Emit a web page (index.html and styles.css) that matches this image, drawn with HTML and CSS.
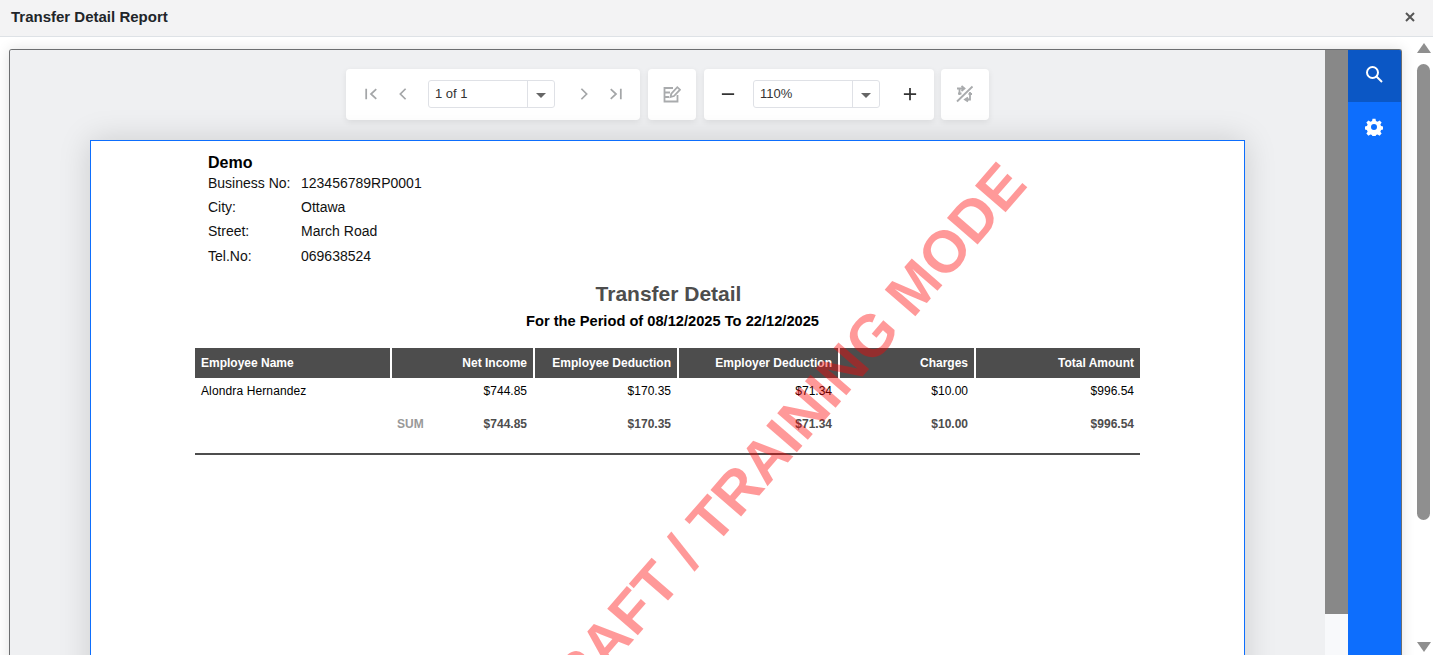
FILE: index.html
```html
<!DOCTYPE html>
<html lang="en">
<head>
<meta charset="utf-8">
<title>Transfer Detail Report</title>
<link rel="stylesheet" href="styles.css">
</head>
<body>
<div class="app">
  <header class="titlebar">
    <h1 class="title">Transfer Detail Report</h1>
    <svg class="close" viewBox="0 0 10 10"><path d="M1 1L9 9M9 1L1 9"/></svg>
  </header>
  <div class="body">
    <main class="viewer">
      <section class="canvas">
        <div class="toolbar">
          <div class="group group-pager">
            <svg class="ico dim" viewBox="0 0 16 16"><path d="M2.500 2V14M14 2.500L8 8L14 13.500"/></svg>
            <svg class="ico dim prev" viewBox="0 0 16 16"><path d="M11 2L5 8L11 14"/></svg>
            <div class="combo combo-page"><span class="combo-value">1 of 1</span><span class="combo-btn"><i class="caret"></i></span></div>
            <svg class="ico dim next" viewBox="0 0 16 16"><path d="M5 2L11 8L5 14"/></svg>
            <svg class="ico dim" viewBox="0 0 16 16"><path d="M2 2.500L8 8L2 13.500M13.500 2V14"/></svg>
          </div>
          <div class="group group-single">
            <svg class="ico-lg" viewBox="0 0 18 18"><path d="M10 3H1.500V16.500H14.500V10M1.500 7.500H7M1.500 12H6"/><path d="M7.500 12L8.300 8.700L14.300 2.200L17 4.700L11 11Z"/></svg>
          </div>
          <div class="group group-zoom">
            <svg class="ico strong" viewBox="0 0 16 16"><path d="M1 8H15"/></svg>
            <div class="combo combo-zoom"><span class="combo-value">110%</span><span class="combo-btn"><i class="caret"></i></span></div>
            <svg class="ico strong" viewBox="0 0 16 16"><path d="M1 8H15M8 1V15"/></svg>
          </div>
          <div class="group group-single group-last">
            <svg class="ico-lg" viewBox="0 0 18 18"><path d="M1 16.500L16.500 1.500"/><path d="M1 3.500H8M5.500 1L8.500 3.500L5.500 6M3.500 3.500V10M2 8.500H5.500"/><path d="M14 7V14.500H9.500M12 12.500L9 14.500L12 16.500M12.500 9H16"/></svg>
          </div>
        </div>
        <article class="page">
          <div class="company">
            <div class="company-name">Demo</div>
            <div class="company-row"><span class="company-key">Business No:</span><span>123456789RP0001</span></div>
            <div class="company-row"><span class="company-key">City:</span><span>Ottawa</span></div>
            <div class="company-row"><span class="company-key">Street:</span><span>March Road</span></div>
            <div class="company-row"><span class="company-key">Tel.No:</span><span>069638524</span></div>
          </div>
          <h2 class="report-title">Transfer Detail</h2>
          <p class="report-period">For the Period of 08/12/2025 To 22/12/2025</p>
          <div class="table">
            <div class="t-row t-head">
              <div class="cell left">Employee Name</div>
              <div class="cell">Net Income</div>
              <div class="cell">Employee Deduction</div>
              <div class="cell">Employer Deduction</div>
              <div class="cell">Charges</div>
              <div class="cell">Total Amount</div>
            </div>
            <div class="t-row t-data">
              <div class="cell left">Alondra Hernandez</div>
              <div class="cell">$744.85</div>
              <div class="cell">$170.35</div>
              <div class="cell">$71.34</div>
              <div class="cell">$10.00</div>
              <div class="cell">$996.54</div>
            </div>
            <div class="t-row t-sum">
              <div class="cell left"></div>
              <div class="cell sum-cell"><span class="sum-label">SUM</span><span>$744.85</span></div>
              <div class="cell">$170.35</div>
              <div class="cell">$71.34</div>
              <div class="cell">$10.00</div>
              <div class="cell">$996.54</div>
            </div>
          </div>
          <div class="watermark">DRAFT / TRAINING MODE</div>
        </article>
      </section>
      <div class="inner-scroll"><div class="inner-thumb"></div></div>
      <aside class="sidebar">
        <div class="side-btn active">
          <svg class="side-ico" viewBox="0 0 18 18"><circle cx="7.500" cy="7.500" r="5.500"/><path d="M11.500 11.500L17 17"/></svg>
        </div>
        <div class="side-btn">
          <svg class="side-gear" viewBox="0 0 24 24"><path fill-rule="evenodd" d="M10 1h4l.6 3 2.200.9 2.600-1.700 2.800 2.800-1.700 2.600.9 2.200 3 .6v4l-3 .6-.9 2.200 1.700 2.600-2.800 2.800-2.600-1.700-2.200.9-.6 3h-4l-.6-3-2.200-.9-2.600 1.700-2.800-2.800 1.700-2.600-.9-2.200-3-.6v-4l3-.6.9-2.200-1.700-2.600 2.800-2.800 2.600 1.700 2.200-.9zM12 8a4 4 0 1 0 0 8 4 4 0 0 0 0-8z"/></svg>
        </div>
      </aside>
    </main>
    <div class="outer-scroll">
      <i class="arrow-up"></i>
      <div class="outer-track"><div class="outer-thumb"></div></div>
      <i class="arrow-down"></i>
    </div>
  </div>
</div>
</body>
</html>
```
FILE: styles.css
```css
* { box-sizing: border-box; }
html, body { margin: 0; height: 100%; overflow: hidden; }
body { font-family: "Liberation Sans", Arial, sans-serif; color: #000; background: #fff; }
.app { height: 655px; display: flex; flex-direction: column; overflow: hidden; }

.titlebar { height: 37px; flex: none; display: flex; align-items: center; justify-content: space-between; padding: 0 18px 3px 11px; background: #f3f3f4; border-bottom: 1px solid #dee2e6; }
.title { margin: 0; font-size: 15px; font-weight: 700; color: #212529; }
.close { width: 10px; height: 10px; fill: none; stroke: #555; stroke-width: 2; }

.body { flex: 1; min-height: 0; display: flex; padding: 12px 2px 0 9px; background: #fff; }
.viewer { width: 1393px; flex: none; display: flex; height: 620px; border: 1px solid #6c6e70; border-bottom: 0; border-radius: 3px 3px 0 0; box-shadow: 0 0 14px rgba(0,0,0,.12); overflow: hidden; }

.canvas { width: 1315px; flex: none; background: #eff0f2; display: flex; flex-direction: column; align-items: center; padding-top: 19px; overflow: hidden; }
.toolbar { display: flex; gap: 8px; height: 51px; flex: none; }
.group { background: #fff; border-radius: 4px; box-shadow: 0 2px 6px rgba(0,0,0,.08); display: flex; align-items: center; padding-bottom: 1px; }
.group-pager { width: 294px; padding-left: 18px; }
.group-single { width: 48px; justify-content: center; }
.group-last { margin-left: -1px; }
.group-zoom { width: 230px; padding-left: 17px; }
.ico { width: 14px; height: 14px; flex: none; fill: none; stroke-width: 2; }
.dim { stroke: #a4a6a8; }
.strong { stroke: #333; stroke-width: 2; width: 14px; }
.prev { margin-left: 18px; }
.next { margin-left: 22px; }
.next + .dim { margin-left: 18px; }
.ico-lg { width: 18px; height: 18px; fill: none; stroke: #a9abad; stroke-width: 1.800; }
.combo { width: 127px; height: 28px; display: flex; border: 1px solid #dfe1e6; border-radius: 3px; font-size: 13px; color: #333; }
.combo-page { margin-left: 18px; }
.combo-zoom { margin: 0 23px 0 18px; }
.combo-value { flex: 1; padding-left: 6px; line-height: 25px; }
.combo-btn { width: 27px; border-left: 1px solid #dfe1e6; display: flex; align-items: center; justify-content: center; }
.caret { width: 0; height: 0; border: 5px solid transparent; border-top: 5px solid #666; border-bottom: 0; margin-top: 2px; }

.page { position: relative; width: 1155px; height: 900px; flex: none; margin-top: 20px; background: #fff; border: 1px solid #0d6efd; box-shadow: 0 0 30px rgba(0,0,0,.15); padding: 12px 104px 0; }
.company { padding-left: 13px; font-size: 14px; color: #111; }
.company-name { font-size: 16px; font-weight: 700; line-height: 19px; color: #000; }
.company-row { display: flex; height: 24.500px; line-height: 22px; }
.company-row:nth-child(2) { height: 23.500px; }
.company-key { width: 93px; flex: none; }
.report-title { margin: 12px 0 0; padding-left: 2px; text-align: center; font-size: 21px; line-height: 26px; font-weight: 700; color: #4d4d4d; }
.report-period { margin: 4px 0 0; padding-left: 10px; text-align: center; font-size: 14.670px; line-height: 20px; font-weight: 700; color: #000; }

.table { width: 945px; margin-top: 17px; border-bottom: 2px solid #4d4d4d; height: 107px; font-size: 12px; }
.t-row { display: grid; grid-template-columns: 195px 141px 142px 159px 134px 164px; column-gap: 2px; }
.cell { text-align: right; padding: 0 6px; }
.left { text-align: left; }
.t-head { height: 29px; line-height: 30px; font-weight: 700; color: #fff; }
.t-head .cell { background: #4d4d4d; }
.t-data { height: 28px; line-height: 29px; color: #000; }
.t-data .left { letter-spacing: .12px; }
.t-sum { height: 20px; line-height: 38px; font-weight: 700; color: #4d4d4d; }
.sum-cell { display: flex; justify-content: space-between; padding-left: 5px; }
.sum-label { color: #999; }

.watermark { position: absolute; left: 684px; top: 306px; font-size: 59px; line-height: 66px; font-weight: 700; white-space: nowrap; color: rgba(255,0,0,.4); transform: translate(-50%, -50%) rotate(-49deg); transform-origin: center; }

.inner-scroll { width: 23px; flex: none; background: #f8f9fb; }
.inner-thumb { height: 564px; background: #888; }
.sidebar { width: 54px; flex: none; background: #0d6efd; }
.side-btn { height: 52px; display: flex; align-items: center; justify-content: center; padding: 0 2px 2px 0; }
.side-btn.active { background: #0b57c5; padding-bottom: 4px; }
.side-ico { width: 18px; height: 18px; fill: none; stroke: #fff; stroke-width: 2; }
.side-gear { width: 18px; height: 18px; fill: #fff; }

.outer-scroll { flex: 1; display: flex; flex-direction: column; align-items: center; padding-left: 14px; }
.outer-track { height: 589px; padding-top: 11px; }
.outer-thumb { width: 13px; height: 456px; border-radius: 7px; background: #8f8f8f; }
.arrow-up { width: 0; height: 0; margin-top: -6px; border: 7.500px solid transparent; border-bottom: 10px solid #8f8f8f; border-top: 0; }
.arrow-down { width: 0; height: 0; border: 7.500px solid transparent; border-top: 10px solid #8f8f8f; border-bottom: 0; }
```
